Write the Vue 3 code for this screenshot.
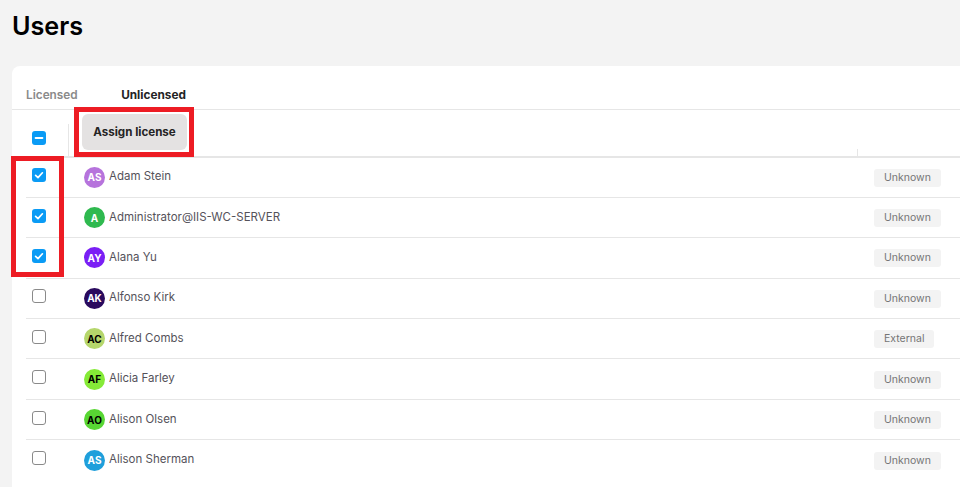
<script setup>
const users = [
  { name: 'Adam Stein', initials: 'AS', color: '#b673dc', text: '#fff', status: 'Unknown', checked: true },
  { name: 'Administrator@IIS-WC-SERVER', initials: 'A', color: '#2fb94f', text: '#fff', status: 'Unknown', checked: true },
  { name: 'Alana Yu', initials: 'AY', color: '#7a1ff5', text: '#fff', status: 'Unknown', checked: true },
  { name: 'Alfonso Kirk', initials: 'AK', color: '#2a0a5e', text: '#fff', status: 'Unknown', checked: false },
  { name: 'Alfred Combs', initials: 'AC', color: '#b5d66b', text: '#000', status: 'External', checked: false },
  { name: 'Alicia Farley', initials: 'AF', color: '#85ea37', text: '#000', status: 'Unknown', checked: false },
  { name: 'Alison Olsen', initials: 'AO', color: '#58d633', text: '#000', status: 'Unknown', checked: false },
  { name: 'Alison Sherman', initials: 'AS', color: '#1f9fdb', text: '#fff', status: 'Unknown', checked: false }
]
</script>

<template>
  <div class="page">
    <h1 class="title">Users</h1>
    <section class="card">
      <div class="tabs">
        <span class="tab">Licensed</span>
        <span class="tab active">Unlicensed</span>
      </div>
      <div class="table">
        <div class="toolbar">
          <div class="check-cell head-check">
            <span class="box on">
              <svg viewBox="0 0 14 14" width="14" height="14"><path d="M3.6 7h6.8" stroke="#fff" stroke-width="2" stroke-linecap="round" fill="none" /></svg>
            </span>
          </div>
          <span class="divider"></span>
          <button class="assign" type="button">Assign license</button>
          <span class="col-tick"></span>
        </div>
        <div v-for="u in users" :key="u.name" class="row">
          <div class="check-cell">
            <span class="box" :class="{ on: u.checked }">
              <svg v-if="u.checked" viewBox="0 0 14 14" width="14" height="14"><path d="M3.6 7.3l2.4 2.3 4.4-4.8" stroke="#fff" stroke-width="1.7" stroke-linecap="round" stroke-linejoin="round" fill="none" /></svg>
            </span>
          </div>
          <div class="user">
            <span class="avatar" :style="{ background: u.color, color: u.text }">{{ u.initials }}</span>
            <span class="name">{{ u.name }}</span>
          </div>
          <div class="status"><span class="badge">{{ u.status }}</span></div>
        </div>
      </div>
    </section>
    <div class="mark mark-button"></div>
    <div class="mark mark-checks"></div>
  </div>
</template>

<style>
html, body { margin: 0; overflow: hidden; }
</style>

<style scoped>
.page {
  position: relative;
  width: 960px;
  height: 487px;
  overflow: hidden;
  background: #f3f3f3;
  font-family: Inter, "Liberation Sans", sans-serif;
  padding: 12px 0 0 12px;
  box-sizing: border-box;
}
.title {
  margin: 0;
  font-size: 25.2px;
  line-height: 29px;
  font-weight: 600;
  color: #000;
}
.card {
  margin-top: 25px;
  height: 440px;
  background: #fff;
  border-radius: 8px 0 0 0;
}
.tabs {
  display: flex;
  gap: 43.5px;
  height: 43px;
  padding: 0 0 0 14px;
  align-items: flex-end;
  border-bottom: 1px solid #e6e6e6;
}
.tab {
  font-size: 11.8px;
  line-height: 15px;
  font-weight: 600;
  color: #8a8a8a;
  padding-bottom: 6px;
}
.tab.active { color: #242424; font-weight: 700; }
.table { margin-left: 14px; }
.toolbar {
  position: relative;
  display: flex;
  align-items: center;
  height: 45.5px;
  border-bottom: 2px solid #e6e6e6;
}
.check-cell {
  width: 26px;
  display: flex;
  justify-content: center;
}
.head-check { padding-top: 11px; }
.box {
  width: 14px;
  height: 14px;
  box-sizing: border-box;
  border: 1px solid #8a8a8a;
  border-radius: 3px;
  background: #fff;
  display: block;
}
.box.on { background: #0a9bf5; border: 0; }
.box svg { display: block; }
.divider {
  width: 1px;
  height: 32px;
  margin-left: 16px;
  align-self: flex-end;
  background: #e6e6e6;
}
.assign {
  margin: -1px 0 0 13px;
  width: 105px;
  height: 36px;
  border: 0;
  border-radius: 6px;
  background: #e4e2e2;
  font: 700 11.6px Inter, "Liberation Sans", sans-serif;
  color: #242424;
  padding: 0;
}
.col-tick {
  position: absolute;
  left: 831px;
  bottom: 0;
  width: 1px;
  height: 7px;
  background: #e6e6e6;
}
.row {
  display: flex;
  align-items: center;
  height: 40.4px;
  box-sizing: border-box;
  border-bottom: 1px solid #e6e6e6;
}
.row:last-child { border-bottom: 0; }
.row .check-cell { margin-top: -4px; }
.user {
  display: flex;
  align-items: center;
  margin-left: 32px;
  flex: 1;
  min-width: 0;
}
.avatar {
  width: 21px;
  height: 21px;
  border-radius: 50%;
  font-size: 10px;
  font-weight: 700;
  display: flex;
  align-items: center;
  justify-content: center;
  flex: none;
}
.name {
  margin-left: 4px;
  margin-top: -1px;
  font-size: 11.5px;
  line-height: 15px;
  color: #55525a;
}
.status { width: 86px; flex: none; margin-top: 1px; }
.badge {
  display: block;
  width: fit-content;
  font-size: 10.5px;
  line-height: 18px;
  height: 18px;
  padding: 0 10px;
  border-radius: 3px;
  background: #f3f3f3;
  color: #757575;
}
.mark {
  position: absolute;
  box-sizing: border-box;
  border: 5px solid #ed1c24;
}
.mark-button { left: 74px; top: 107px; width: 120px; height: 50px; }
.mark-checks { left: 11px; top: 156px; width: 53px; height: 121px; }
</style>
